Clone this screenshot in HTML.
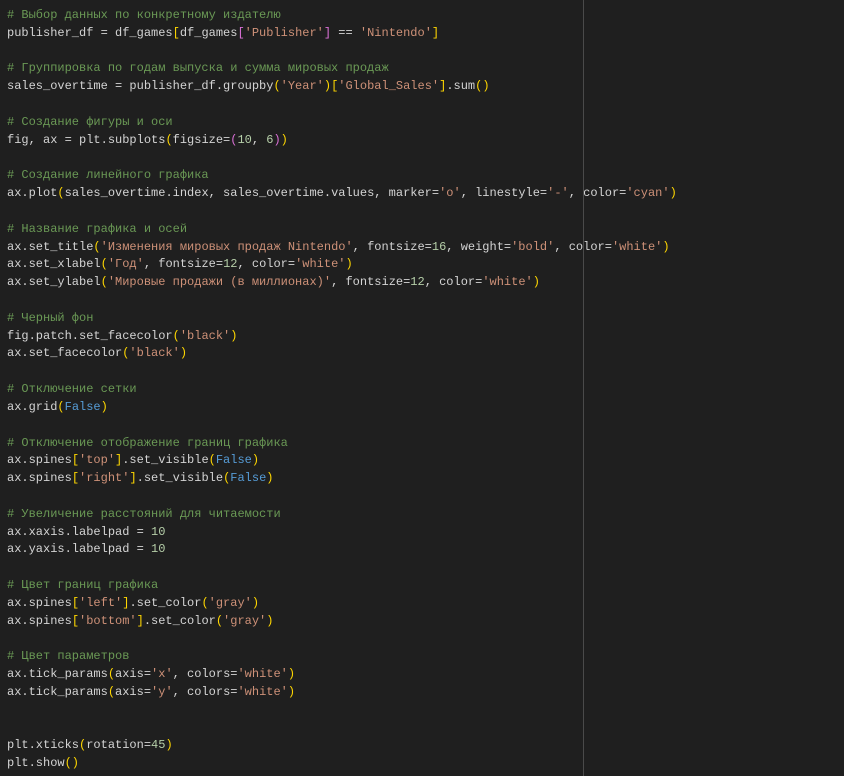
<!DOCTYPE html>
<html><head><meta charset="utf-8"><style>
html,body{margin:0;padding:0;background:#1f1f1f;width:844px;height:776px;overflow:hidden}
pre{margin:0;padding:7px 0 0 7px;font-family:"Liberation Mono",monospace;font-size:12px;line-height:17.81px;color:#d4d4d4;white-space:pre}
.c{color:#6a9955}.s{color:#ce9178}.n{color:#b5cea8}.k{color:#569cd6}.b1{color:#ffd700}.b2{color:#da70d6}.b3{color:#179fff}
.r{position:absolute;left:583px;top:0;width:1px;height:776px;background:#4a4a4a}
</style></head><body><div class="r"></div><pre><span class="c"># Выбор данных по конкретному издателю</span>
publisher_df = df_games<span class="b1">[</span>df_games<span class="b2">[</span><span class="s">'Publisher'</span><span class="b2">]</span> == <span class="s">'Nintendo'</span><span class="b1">]</span>

<span class="c"># Группировка по годам выпуска и сумма мировых продаж</span>
sales_overtime = publisher_df.groupby<span class="b1">(</span><span class="s">'Year'</span><span class="b1">)[</span><span class="s">'Global_Sales'</span><span class="b1">]</span>.sum<span class="b1">()</span>

<span class="c"># Создание фигуры и оси</span>
fig, ax = plt.subplots<span class="b1">(</span>figsize=<span class="b2">(</span><span class="n">10</span>, <span class="n">6</span><span class="b2">)</span><span class="b1">)</span>

<span class="c"># Создание линейного графика</span>
ax.plot<span class="b1">(</span>sales_overtime.index, sales_overtime.values, marker=<span class="s">'o'</span>, linestyle=<span class="s">'-'</span>, color=<span class="s">'cyan'</span><span class="b1">)</span>

<span class="c"># Название графика и осей</span>
ax.set_title<span class="b1">(</span><span class="s">'Изменения мировых продаж Nintendo'</span>, fontsize=<span class="n">16</span>, weight=<span class="s">'bold'</span>, color=<span class="s">'white'</span><span class="b1">)</span>
ax.set_xlabel<span class="b1">(</span><span class="s">'Год'</span>, fontsize=<span class="n">12</span>, color=<span class="s">'white'</span><span class="b1">)</span>
ax.set_ylabel<span class="b1">(</span><span class="s">'Мировые продажи (в миллионах)'</span>, fontsize=<span class="n">12</span>, color=<span class="s">'white'</span><span class="b1">)</span>

<span class="c"># Черный фон</span>
fig.patch.set_facecolor<span class="b1">(</span><span class="s">'black'</span><span class="b1">)</span>
ax.set_facecolor<span class="b1">(</span><span class="s">'black'</span><span class="b1">)</span>

<span class="c"># Отключение сетки</span>
ax.grid<span class="b1">(</span><span class="k">False</span><span class="b1">)</span>

<span class="c"># Отключение отображение границ графика</span>
ax.spines<span class="b1">[</span><span class="s">'top'</span><span class="b1">]</span>.set_visible<span class="b1">(</span><span class="k">False</span><span class="b1">)</span>
ax.spines<span class="b1">[</span><span class="s">'right'</span><span class="b1">]</span>.set_visible<span class="b1">(</span><span class="k">False</span><span class="b1">)</span>

<span class="c"># Увеличение расстояний для читаемости</span>
ax.xaxis.labelpad = <span class="n">10</span>
ax.yaxis.labelpad = <span class="n">10</span>

<span class="c"># Цвет границ графика</span>
ax.spines<span class="b1">[</span><span class="s">'left'</span><span class="b1">]</span>.set_color<span class="b1">(</span><span class="s">'gray'</span><span class="b1">)</span>
ax.spines<span class="b1">[</span><span class="s">'bottom'</span><span class="b1">]</span>.set_color<span class="b1">(</span><span class="s">'gray'</span><span class="b1">)</span>

<span class="c"># Цвет параметров</span>
ax.tick_params<span class="b1">(</span>axis=<span class="s">'x'</span>, colors=<span class="s">'white'</span><span class="b1">)</span>
ax.tick_params<span class="b1">(</span>axis=<span class="s">'y'</span>, colors=<span class="s">'white'</span><span class="b1">)</span>


plt.xticks<span class="b1">(</span>rotation=<span class="n">45</span><span class="b1">)</span>
plt.show<span class="b1">()</span></pre></body></html>
